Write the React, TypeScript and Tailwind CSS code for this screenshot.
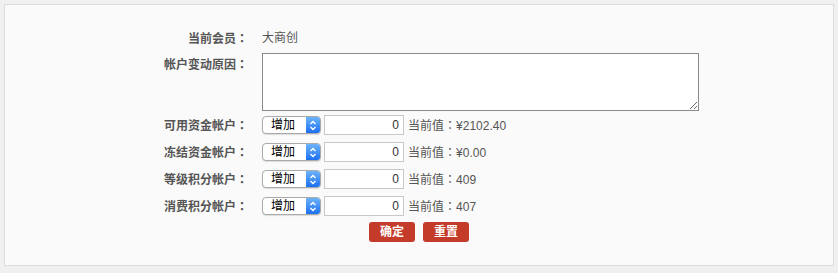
import React from 'react';

const rows = [
  { label: '可用资金帐户', value: '¥2102.40' },
  { label: '冻结资金帐户', value: '¥0.00' },
  { label: '等级积分帐户', value: '409' },
  { label: '消费积分帐户', value: '407' },
];

// full-width colon, centred in its cell like the reference
function Colon() {
  return <span className="font-['Noto_Sans_CJK_TC']">：</span>;
}

function AquaSelect() {
  return (
    <div className="flex h-[18px] w-[59px] items-stretch overflow-hidden rounded-[4px] border border-[#aaa] bg-white shadow-[0_1px_1px_rgba(0,0,0,0.12)]">
      <span className="flex flex-1 items-center pl-[8px] text-[12px] text-black">增加</span>
      <span className="flex w-[14px] items-center justify-center bg-gradient-to-b from-[#6cb3fa] to-[#1a6ef0]">
        <svg width="8" height="11" viewBox="0 0 8 11" fill="none" stroke="white" strokeWidth="1.4">
          <path d="M1.5 4 L4 1.5 L6.5 4" />
          <path d="M1.5 7 L4 9.5 L6.5 7" />
        </svg>
      </span>
    </div>
  );
}

export default function App() {
  return (
    <div
      className="h-[273px] w-[838px] bg-[#f0f0f0] p-[4px] text-[12px] text-[#555]"
      style={{ fontFamily: '"Liberation Sans", "Noto Sans CJK SC", sans-serif' }}
    >
      <div className="h-[262px] w-[830px] border border-[#dcdcdc] bg-[#fafafa] pt-[23px]">
        {/* current member */}
        <div className="flex h-[20px] items-center">
          <div className="w-[243px] text-right font-bold">
            当前会员<Colon />
          </div>
          <div className="pl-[14px]">大商创</div>
        </div>

        {/* reason */}
        <div className="mt-[5px] flex items-start">
          <div className="w-[243px] pt-[1px] text-right font-bold leading-[20px]">
            帐户变动原因<Colon />
          </div>
          <div className="pl-[14px]">
            <textarea className="block h-[58px] w-[437px] border border-[#8a8a8a] bg-white outline-none" />
          </div>
        </div>

        {/* accounts */}
        <div className="mt-[4px] flex flex-col gap-[7px]">
          {rows.map((r) => (
            <div key={r.label} className="flex h-[20px] items-center">
              <div className="w-[243px] text-right font-bold">
                {r.label}
                <Colon />
              </div>
              <div className="flex items-center pl-[14px]">
                <AquaSelect />
                <input
                  readOnly
                  value="0"
                  className="ml-[3px] h-[20px] w-[80px] border border-[#c8c8c8] bg-white pr-[4px] text-right text-[12px] text-[#333] outline-none"
                />
                <span className="ml-[4px]">
                  当前值<Colon />
                  {r.value}
                </span>
              </div>
            </div>
          ))}
        </div>

        {/* actions */}
        <div className="mt-[6px] flex gap-[8px] pl-[364px]">
          <button className="h-[20px] w-[46px] rounded-[3px] bg-[#c43b2a] text-[12px] font-bold text-white">确定</button>
          <button className="h-[20px] w-[46px] rounded-[3px] bg-[#c43b2a] text-[12px] font-bold text-white">重置</button>
        </div>
      </div>
    </div>
  );
}
